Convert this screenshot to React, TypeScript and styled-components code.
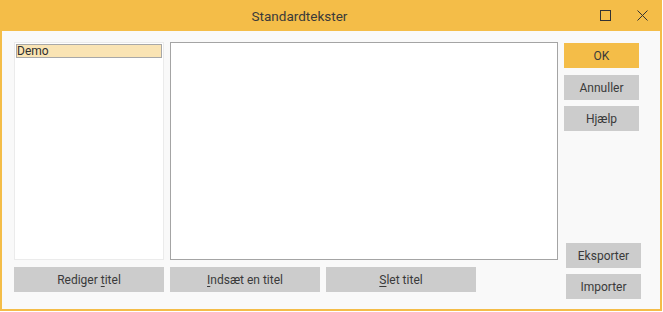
import styled, { createGlobalStyle } from 'styled-components';

const GlobalStyle = createGlobalStyle`
  html, body {
    margin: 0;
    padding: 0;
    background: #ffffff;
  }
  body {
    font-family: Roboto, 'Noto Sans', sans-serif;
    color: #333333;
  }
`;

const Window = styled.div`
  width: 662px;
  height: 311px;
  box-sizing: border-box;
  border: 2px solid #f4bd48;
  border-top: none;
  display: flex;
  flex-direction: column;
  background: #f9f9f9;
`;

const TitleBar = styled.div`
  height: 31px;
  flex: none;
  background: #f4bd48;
  display: flex;
  align-items: center;
`;

const Title = styled.div`
  flex: 1;
  text-align: center;
  font-size: 13.5px;
  color: #3a3a3a;
  padding-left: 2px;
`;

const WindowControls = styled.div`
  width: 65px;
  display: flex;
  align-items: center;
  gap: 26px;
  padding-left: 5px;
  padding-bottom: 1px;
  box-sizing: border-box;
`;

const ControlIcon = styled.svg`
  width: 11px;
  height: 11px;
  display: block;
`;

const Body = styled.div`
  flex: 1;
  display: flex;
  padding: 11px 19px 10px 12px;
  gap: 6px;
`;

const MainArea = styled.div`
  display: flex;
  flex-direction: column;
  gap: 7px;
`;

const TopRow = styled.div`
  display: flex;
  gap: 6px;
  height: 218px;
`;

const TitleList = styled.div`
  width: 150px;
  box-sizing: border-box;
  background: #ffffff;
  border: 1px solid #ebebeb;
  padding: 1px;
`;

const ListItem = styled.div<{ $selected?: boolean }>`
  height: 14px;
  box-sizing: border-box;
  border: 1px solid ${(p) => (p.$selected ? '#a8a8a8' : 'transparent')};
  background: ${(p) => (p.$selected ? '#fae4b4' : 'transparent')};
  font-size: 12px;
  line-height: 12px;
  padding-left: 0;
  color: #2f2f2f;
`;

const TextArea = styled.div`
  width: 388px;
  box-sizing: border-box;
  background: #ffffff;
  border: 1px solid #a4a4a4;
`;

const BottomRow = styled.div`
  display: flex;
  gap: 6px;
`;

const Button = styled.div<{ $primary?: boolean; $wide?: boolean }>`
  width: ${(p) => (p.$wide ? '150px' : '75px')};
  height: 25px;
  box-sizing: border-box;
  display: flex;
  align-items: center;
  justify-content: center;
  font-size: 12px;
  color: #3a3a3a;
  background: ${(p) => (p.$primary ? '#f4bd48' : '#cccccc')};
  user-select: none;
`;

const Key = styled.span`
  text-decoration: underline;
  text-underline-offset: 2px;
`;

const SideColumn = styled.div`
  display: flex;
  flex-direction: column;
  justify-content: space-between;
  padding-top: 1px;
`;

const ButtonGroup = styled.div<{ $offset?: number }>`
  display: flex;
  flex-direction: column;
  gap: 6px;
  margin-left: ${(p) => p.$offset ?? 0}px;
`;

export default function App() {
  return (
    <>
      <GlobalStyle />
      <Window>
        <TitleBar>
          <Title>Standardtekster</Title>
          <WindowControls>
            <ControlIcon viewBox="0 0 11 11">
              <rect x="0.5" y="0.5" width="10" height="10" fill="none" stroke="#333" strokeWidth="1" />
            </ControlIcon>
            <ControlIcon viewBox="0 0 11 11">
              <path d="M0.5 0.5 L10.5 10.5 M10.5 0.5 L0.5 10.5" stroke="#333" strokeWidth="1" />
            </ControlIcon>
          </WindowControls>
        </TitleBar>
        <Body>
          <MainArea>
            <TopRow>
              <TitleList>
                <ListItem $selected>Demo</ListItem>
              </TitleList>
              <TextArea />
            </TopRow>
            <BottomRow>
              <Button $wide>
                Rediger&nbsp;<Key>t</Key>itel
              </Button>
              <Button $wide>
                <Key>I</Key>ndsæt en titel
              </Button>
              <Button $wide>
                <Key>S</Key>let titel
              </Button>
            </BottomRow>
          </MainArea>
          <SideColumn>
            <ButtonGroup style={{ gap: 7 }}>
              <Button $primary>OK</Button>
              <ButtonGroup>
                <Button>Annuller</Button>
                <Button>Hjælp</Button>
              </ButtonGroup>
            </ButtonGroup>
            <ButtonGroup $offset={2}>
              <Button>Eksporter</Button>
              <Button>Importer</Button>
            </ButtonGroup>
          </SideColumn>
        </Body>
      </Window>
    </>
  );
}
